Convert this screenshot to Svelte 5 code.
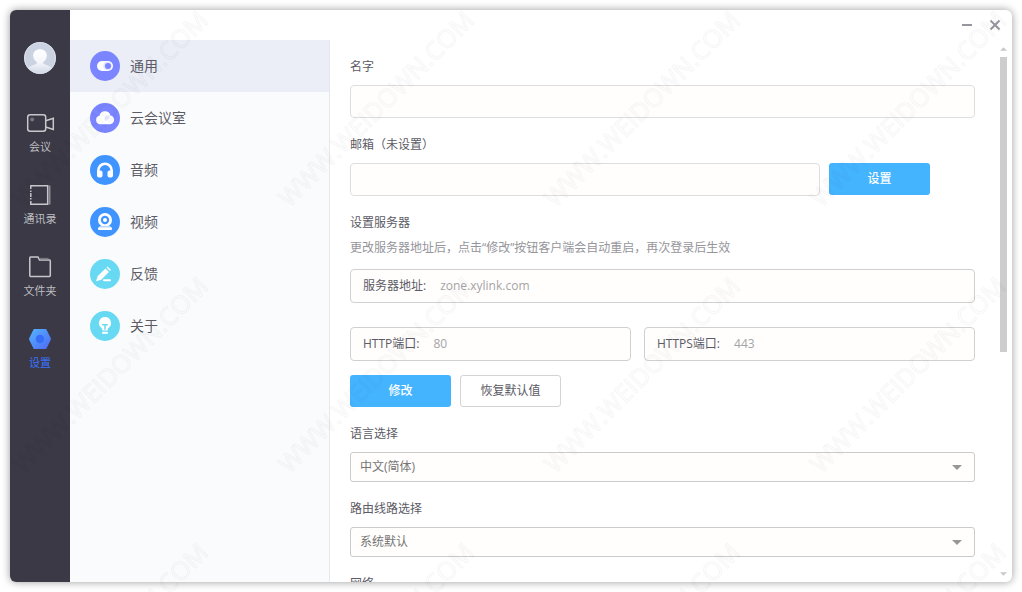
<script>
  let activeNav = $state('general');

  const rail = [
    { id: 'meeting', label: '会议' },
    { id: 'contacts', label: '通讯录' },
    { id: 'files', label: '文件夹' },
    { id: 'settings', label: '设置' }
  ];

  const nav = [
    { id: 'general', label: '通用', tone: 'violet' },
    { id: 'cloud', label: '云会议室', tone: 'violet' },
    { id: 'audio', label: '音频', tone: 'blue' },
    { id: 'video', label: '视频', tone: 'blue' },
    { id: 'feedback', label: '反馈', tone: 'cyan' },
    { id: 'about', label: '关于', tone: 'cyan' }
  ];
</script>

<div class="window">
  <aside class="rail">
    <svg class="avatar" viewBox="0 0 32 32" aria-hidden="true">
      <defs>
        <linearGradient id="person" x1="0" y1="0" x2="0" y2="1">
          <stop offset="0" stop-color="#ffffff" />
          <stop offset="0.55" stop-color="#f4f6fb" />
          <stop offset="1" stop-color="#cfd5e4" />
        </linearGradient>
        <clipPath id="round"><circle cx="16" cy="16" r="15.5" /></clipPath>
      </defs>
      <circle cx="16" cy="16" r="16" fill="#cbd2e2" />
      <path
        clip-path="url(#round)"
        fill="url(#person)"
        d="M16 7.200c-4 0-6.900 2.600-6.900 6.400 0 2.600 1.200 4.600 3.200 6.100.9.800.8 1.800-.300 2.400C8.500 23.700 5 24.300 2.500 27.500V32h27v-4.500c-2.500-3.200-6-3.800-9.500-5.400-1.100-.600-1.200-1.600-.300-2.400 2-1.500 3.200-3.500 3.200-6.100 0-3.800-2.900-6.400-6.900-6.400z"
      />
      <circle cx="16" cy="16" r="15.500" fill="none" stroke="#d9deea" />
    </svg>

    <nav class="rail-items" aria-label="主菜单">
      {#each rail as item}
        <button class="rail-item" class:current={item.id === 'settings'}>
          <svg viewBox="0 0 32 24" aria-hidden="true">
            {#if item.id === 'meeting'}
              <g fill="none" stroke="#c8c8cc" stroke-width="1.500">
                <rect x="3.700" y="3.700" width="18" height="16.500" rx="2.500" />
                <path d="M21.700 9.800l7.600-2.600v11.200l-7.600-2.400" />
              </g>
              <circle cx="8.200" cy="8.500" r="2" fill="#77767f" />
            {:else if item.id === 'contacts'}
              <path d="M6.800 6V2.800h16.900v18.400H6.800V18" fill="none" stroke="#c8c8cc" stroke-width="1.500" />
              <path d="M6.800 7.500v9" stroke="#c8c8cc" stroke-width="1.500" stroke-dasharray="1.500 1 4 1" />
              <path d="M25.500 2.500v19" stroke="#8a8a91" stroke-width="2" />
            {:else if item.id === 'files'}
              <path d="M5.800 20.800V2.800c0-.5.200-.8.800-.8h7.400l1.500 3h9.900c.6 0 .9.300.9.900v14.700c0 .5-.3.800-.9.800H6.600c-.5 0-.8-.2-.8-.6z" fill="none" stroke="#c8c8cc" stroke-width="1.500" />
              <path d="M16 3.600h8.500" stroke="#77767f" stroke-width="1.500" />
            {:else}
              <defs>
                <linearGradient id="hex" x1="0" y1="0" x2="1" y2="1">
                  <stop offset="0" stop-color="#55b5ff" />
                  <stop offset="1" stop-color="#4e68f5" />
                </linearGradient>
              </defs>
              <path d="M10.500 2h11c.5 0 .8.200 1 .6l4.200 8.400c.3.600.3 1.400 0 2l-4.200 8.400c-.2.400-.5.600-1 .6h-11c-.5 0-.8-.2-1-.6L5.300 13c-.3-.6-.3-1.400 0-2l4.200-8.400c.2-.4.500-.6 1-.6z" fill="url(#hex)" />
              <circle cx="16" cy="12" r="4.200" fill="#366ef8" />
            {/if}
          </svg>
          <span>{item.label}</span>
        </button>
      {/each}
    </nav>
  </aside>

  <div class="main">
    <header class="titlebar">
      <button aria-label="最小化">
        <svg viewBox="0 0 12 12" aria-hidden="true"><path d="M1 6h10" stroke="#97969f" stroke-width="2" /></svg>
      </button>
      <button aria-label="关闭">
        <svg viewBox="0 0 12 12" aria-hidden="true"><path d="M1.500 1.500l9 9M10.500 1.500l-9 9" stroke="#97969f" stroke-width="2" /></svg>
      </button>
    </header>

    <div class="body">
      <nav class="sections" aria-label="设置分类">
        {#each nav as item}
          <button class="section" class:active={activeNav === item.id} onclick={() => (activeNav = item.id)}>
            <svg class={item.tone} viewBox="0 0 30 30" aria-hidden="true">
              <circle cx="15" cy="15" r="15" fill="currentColor" />
              {#if item.id === 'general'}
                <rect x="7" y="10" width="16" height="10" rx="5" fill="#fff" />
                <circle cx="17.500" cy="15" r="4.200" fill="#dfe1ff" />
                <circle cx="18" cy="15" r="3" fill="currentColor" />
              {:else if item.id === 'cloud'}
                <path d="M10.200 21.300a4.300 4.300 0 0 1-.7-8.500 5.600 5.600 0 0 1 10.900-.4 4.500 4.500 0 0 1-.5 8.900z" fill="#fff" />
                <path d="M14.500 15.500c.5-2.500 3-3.800 5.500-3-.5 3-2.500 4.500-5 6z" fill="#e6e8ff" />
              {:else if item.id === 'audio'}
                <path d="M8.300 18v-2.500a6.700 6.700 0 0 1 13.400 0V18" fill="none" stroke="#fff" stroke-width="2.600" />
                <rect x="7" y="15.500" width="5.500" height="7" rx="2" fill="#fff" />
                <rect x="17.500" y="15.500" width="5.500" height="7" rx="2" fill="#fff" />
              {:else if item.id === 'video'}
                <circle cx="15" cy="13" r="7" fill="#fff" />
                <circle cx="15" cy="13" r="4.200" fill="currentColor" />
                <circle cx="15" cy="13" r="2" fill="#fff" />
                <path d="M10 19h10l2 2H8z" fill="#b9d9ff" />
                <rect x="8" y="20.500" width="14" height="2.500" rx="1" fill="#fff" />
              {:else if item.id === 'feedback'}
                <path d="M6 22.300l1.800-5.200 7.700-7.500 3.400 3.400-7.700 7.700z" fill="#fff" />
                <path d="M16.500 8.600l1-1 3.500 3.500-1 1z" fill="#fff" />
                <rect x="13" y="20.300" width="8" height="2" rx="1" fill="#fff" />
              {:else}
                <path d="M15 6a6 6 0 0 0-3.500 10.900c.6.500.8 1 .8 1.900v.7h5.400v-.7c0-.9.200-1.400.8-1.900A6 6 0 0 0 15 6z" fill="#fff" />
                <path d="M12.200 13.700h5.600M15 13.700v5" stroke="currentColor" stroke-width="1.500" />
                <rect x="12.200" y="20.800" width="5.600" height="2" fill="#fff" />
              {/if}
            </svg>
            <span>{item.label}</span>
          </button>
        {/each}
      </nav>

      <main class="pane">
        <form class="form" onsubmit={(e) => e.preventDefault()}>
          <div class="group">
            <label for="name">名字</label>
            <input class="box" id="name" type="text" />
          </div>

          <div class="group">
            <label for="email">邮箱（未设置）</label>
            <div class="email-row">
              <input class="box" id="email" type="email" />
              <button class="primary" type="button">设置</button>
            </div>
          </div>

          <section class="server">
            <h2>设置服务器</h2>
            <p>更改服务器地址后，点击“修改”按钮客户端会自动重启，再次登录后生效</p>
            <div class="inline-field">
              <label for="host">服务器地址:</label>
              <input id="host" type="text" placeholder="zone.xylink.com" />
            </div>
            <div class="ports">
              <div class="inline-field">
                <label for="http">HTTP端口:</label>
                <input id="http" type="text" placeholder="80" />
              </div>
              <div class="inline-field">
                <label for="https">HTTPS端口:</label>
                <input id="https" type="text" placeholder="443" />
              </div>
            </div>
            <div class="actions">
              <button class="primary" type="submit">修改</button>
              <button class="plain" type="reset">恢复默认值</button>
            </div>
          </section>

          <div class="group">
            <label for="lang">语言选择</label>
            <div class="select">
              <select id="lang"><option>中文(简体)</option></select>
              <svg viewBox="0 0 10 5" aria-hidden="true"><path d="M0 0h10L5 5z" fill="#979797" /></svg>
            </div>
          </div>

          <div class="group">
            <label for="route">路由线路选择</label>
            <div class="select">
              <select id="route"><option>系统默认</option></select>
              <svg viewBox="0 0 10 5" aria-hidden="true"><path d="M0 0h10L5 5z" fill="#979797" /></svg>
            </div>
          </div>

          <h2>网络</h2>
        </form>

        <div class="scrollbar" aria-hidden="true">
          <svg viewBox="0 0 8 4"><path d="M4 0l4 4H0z" fill="#c9c9c9" /></svg>
          <div class="track"><div class="thumb"></div></div>
          <svg viewBox="0 0 8 4"><path d="M0 0h8L4 4z" fill="#c9c9c9" /></svg>
        </div>
      </main>
    </div>
  </div>
</div>

<svg class="watermark" aria-hidden="true">
  <defs>
    <pattern id="mark" width="266" height="266" patternUnits="userSpaceOnUse">
      <text x="110" y="118" text-anchor="middle" transform="rotate(-45 110 109)">WWW.WEIDOWN.COM</text>
    </pattern>
  </defs>
  <rect width="100%" height="100%" fill="url(#mark)" />
</svg>

<style>
  :global(body) {
    margin: 0;
    background: #fff;
  }
  :global(*) {
    box-sizing: border-box;
  }
  .window {
    display: flex;
    height: calc(100vh - 20px);
    margin: 10px;
    border-radius: 6px;
    overflow: hidden;
    background: #fff;
    box-shadow: 0 0 8px rgba(0, 0, 0, 0.4);
    font: 12px/16px 'Open Sans', 'Noto Sans CJK SC', sans-serif;
    color: #5c5b66;
  }
  button,
  input,
  select {
    margin: 0;
    padding: 0;
    border: 0;
    background: none;
    font: inherit;
    color: inherit;
    outline: none;
  }
  .rail {
    display: flex;
    flex: 0 0 60px;
    flex-direction: column;
    align-items: center;
    gap: 37px;
    padding-top: 32px;
    background: #3a3945;
  }
  .avatar {
    width: 32px;
    height: 32px;
  }
  .rail-items {
    display: flex;
    flex-direction: column;
    gap: 28px;
    width: 100%;
  }
  .rail-item {
    display: flex;
    flex-direction: column;
    align-items: center;
    gap: 4px;
    height: 44px;
    font-size: 11px;
    line-height: 16px;
    color: #bdbdc1;
  }
  .rail-item svg {
    width: 32px;
    height: 24px;
  }
  .rail-item.current {
    color: #3b74ff;
  }
  .main {
    display: flex;
    flex: 1;
    flex-direction: column;
    min-width: 0;
  }
  .titlebar {
    display: flex;
    flex: 0 0 30px;
    align-items: center;
    justify-content: flex-end;
    gap: 16px;
    padding-right: 11px;
  }
  .titlebar button,
  .titlebar svg {
    display: block;
    width: 12px;
    height: 12px;
  }
  .body {
    display: flex;
    flex: 1;
    min-height: 0;
  }
  .sections {
    display: flex;
    flex: 0 0 260px;
    flex-direction: column;
    border-right: 1px solid #e6e8ee;
    background: #fafbfd;
  }
  .section {
    display: flex;
    align-items: center;
    gap: 10px;
    height: 52px;
    padding-left: 20px;
    font-size: 14px;
    line-height: 20px;
  }
  .section.active {
    background: #ebeef7;
  }
  .section svg {
    width: 30px;
    height: 30px;
  }
  .violet {
    color: #7a85ff;
  }
  .blue {
    color: #4094ff;
  }
  .cyan {
    color: #68d9f2;
  }
  .pane {
    display: flex;
    flex: 1;
    min-width: 0;
    min-height: 0;
  }
  .form {
    display: flex;
    flex: 1;
    flex-direction: column;
    gap: 19px;
    min-width: 0;
    padding: 19px 23px 19px 20px;
    overflow-y: auto;
    scrollbar-width: none;
  }
  .form > * {
    flex-shrink: 0;
  }
  .group {
    display: flex;
    flex-direction: column;
    gap: 10px;
  }
  .box {
    width: 100%;
    height: 33px;
    padding: 0 12px;
    border: 1px solid #dedede;
    border-radius: 4px;
    background: #fffefc;
  }
  .email-row {
    display: grid;
    grid-template-columns: 1fr 101px;
    gap: 9px;
    padding-right: 45px;
  }
  .primary,
  .plain {
    height: 32px;
    border-radius: 3px;
  }
  .primary {
    background: #45b4ff;
    color: #fff;
    font-weight: 500;
  }
  .plain {
    border: 1px solid #d4d4d4;
    background: #fff;
  }
  h2,
  p {
    margin: 0;
    font-size: 12px;
    font-weight: 400;
    line-height: 16px;
  }
  .server p {
    margin: 9px 0 13px;
    color: #95959b;
  }
  .inline-field {
    display: flex;
    align-items: baseline;
    gap: 14px;
    height: 34px;
    padding: 0 12px;
    border: 1px solid #d0d0d0;
    border-radius: 4px;
    background: #fffefc;
  }
  .inline-field label {
    line-height: 32px;
    white-space: nowrap;
  }
  .inline-field input {
    flex: 1;
    min-width: 0;
  }
  .inline-field input::placeholder {
    color: #a4a4a8;
    opacity: 1;
  }
  .ports {
    display: grid;
    grid-template-columns: 281fr 331fr;
    gap: 13px;
    margin: 24px 0 14px;
  }
  .actions {
    display: grid;
    grid-template-columns: 101px 101px;
    gap: 9px;
  }
  .select {
    display: grid;
    align-items: center;
    height: 30px;
    border: 1px solid #cbcbcb;
    border-radius: 3px;
    background: #fffefc;
  }
  .select select,
  .select svg {
    grid-area: 1 / 1;
  }
  .select select {
    width: 100%;
    height: 28px;
    padding: 0 30px 0 9px;
    appearance: none;
    color: #757575;
  }
  .select svg {
    justify-self: end;
    width: 10px;
    height: 5px;
    margin-right: 12px;
    pointer-events: none;
  }
  .scrollbar {
    display: flex;
    flex: 0 0 14px;
    flex-direction: column;
    align-items: center;
    gap: 6px;
    padding: 7px 4px 6px 0;
  }
  .scrollbar svg {
    width: 7px;
    height: 4px;
  }
  .track {
    flex: 1;
    width: 7px;
  }
  .thumb {
    height: 58%;
    background: #cdcdcd;
  }
  .watermark {
    position: fixed;
    inset: 0;
    width: 100%;
    height: 100%;
    pointer-events: none;
  }
  .watermark text {
    font: 25px 'Open Sans', sans-serif;
    fill: none;
    stroke: rgba(0, 0, 0, 0.035);
    stroke-width: 1px;
  }
</style>
